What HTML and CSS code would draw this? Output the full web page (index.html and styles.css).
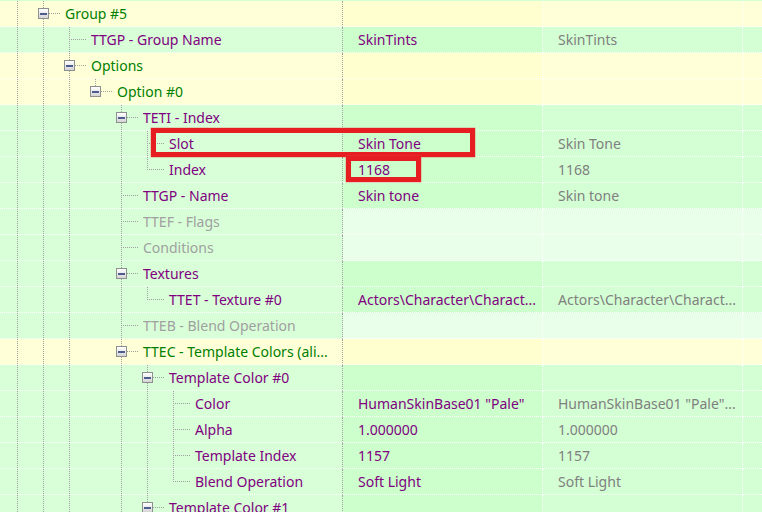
FILE: index.html
```html
<!DOCTYPE html>
<html>
<head>
<meta charset="utf-8">
<link rel="stylesheet" href="styles.css">
</head>
<body>
<div class="tree">
  <div class="row yel">
    <div class="c1"><span class="g v"></span><span class="g k tee"><span class="btn"><span class="minus"></span></span></span><span class="t grn">Group #5</span></div>
    <div class="c2"></div><div class="c3"></div><div class="c4"></div>
  </div>
  <div class="row grnrow">
    <div class="c1"><span class="g v"></span><span class="g v"></span><span class="g k tee"></span><span class="t pur">TTGP - Group Name</span></div>
    <div class="c2">SkinTints</div><div class="c3">SkinTints</div><div class="c4"></div>
  </div>
  <div class="row yel">
    <div class="c1"><span class="g v"></span><span class="g v"></span><span class="g k tee"><span class="btn"><span class="minus"></span></span></span><span class="t grn">Options</span></div>
    <div class="c2"></div><div class="c3"></div><div class="c4"></div>
  </div>
  <div class="row yel">
    <div class="c1"><span class="g v"></span><span class="g v"></span><span class="g v"></span><span class="g k last"><span class="btn"><span class="minus"></span></span></span><span class="t grn">Option #0</span></div>
    <div class="c2"></div><div class="c3"></div><div class="c4"></div>
  </div>
  <div class="row grnrow">
    <div class="c1"><span class="g v"></span><span class="g v"></span><span class="g v"></span><span class="g"></span><span class="g k tee"><span class="btn"><span class="minus"></span></span></span><span class="t pur">TETI - Index</span></div>
    <div class="c2"></div><div class="c3"></div><div class="c4"></div>
  </div>
  <div class="row grnrow">
    <div class="c1"><span class="g v"></span><span class="g v"></span><span class="g v"></span><span class="g"></span><span class="g v"></span><span class="g k tee"></span><span class="t pur">Slot</span></div>
    <div class="c2">Skin Tone</div><div class="c3">Skin Tone</div><div class="c4"></div>
  </div>
  <div class="row grnrow">
    <div class="c1"><span class="g v"></span><span class="g v"></span><span class="g v"></span><span class="g"></span><span class="g v"></span><span class="g k last"></span><span class="t pur">Index</span></div>
    <div class="c2">1168</div><div class="c3">1168</div><div class="c4"></div>
  </div>
  <div class="row grnrow">
    <div class="c1"><span class="g v"></span><span class="g v"></span><span class="g v"></span><span class="g"></span><span class="g k tee"></span><span class="t pur">TTGP - Name</span></div>
    <div class="c2">Skin tone</div><div class="c3">Skin tone</div><div class="c4"></div>
  </div>
  <div class="row lite">
    <div class="c1"><span class="g v"></span><span class="g v"></span><span class="g v"></span><span class="g"></span><span class="g k tee"></span><span class="t gry">TTEF - Flags</span></div>
    <div class="c2"></div><div class="c3"></div><div class="c4"></div>
  </div>
  <div class="row lite">
    <div class="c1"><span class="g v"></span><span class="g v"></span><span class="g v"></span><span class="g"></span><span class="g k tee"></span><span class="t gry">Conditions</span></div>
    <div class="c2"></div><div class="c3"></div><div class="c4"></div>
  </div>
  <div class="row grnrow">
    <div class="c1"><span class="g v"></span><span class="g v"></span><span class="g v"></span><span class="g"></span><span class="g k tee"><span class="btn"><span class="minus"></span></span></span><span class="t pur">Textures</span></div>
    <div class="c2"></div><div class="c3"></div><div class="c4"></div>
  </div>
  <div class="row grnrow">
    <div class="c1"><span class="g v"></span><span class="g v"></span><span class="g v"></span><span class="g"></span><span class="g v"></span><span class="g k last"></span><span class="t pur">TTET - Texture #0</span></div>
    <div class="c2">Actors\Character\Charact...</div><div class="c3">Actors\Character\Charact...</div><div class="c4"></div>
  </div>
  <div class="row lite">
    <div class="c1"><span class="g v"></span><span class="g v"></span><span class="g v"></span><span class="g"></span><span class="g k tee"></span><span class="t gry">TTEB - Blend Operation</span></div>
    <div class="c2"></div><div class="c3"></div><div class="c4"></div>
  </div>
  <div class="row yel">
    <div class="c1"><span class="g v"></span><span class="g v"></span><span class="g v"></span><span class="g"></span><span class="g k tee"><span class="btn"><span class="minus"></span></span></span><span class="t grn">TTEC - Template Colors (ali...</span></div>
    <div class="c2"></div><div class="c3"></div><div class="c4"></div>
  </div>
  <div class="row grnrow">
    <div class="c1"><span class="g v"></span><span class="g v"></span><span class="g v"></span><span class="g"></span><span class="g v"></span><span class="g k tee"><span class="btn"><span class="minus"></span></span></span><span class="t pur">Template Color #0</span></div>
    <div class="c2"></div><div class="c3"></div><div class="c4"></div>
  </div>
  <div class="row grnrow">
    <div class="c1"><span class="g v"></span><span class="g v"></span><span class="g v"></span><span class="g"></span><span class="g v"></span><span class="g v"></span><span class="g k tee"></span><span class="t pur">Color</span></div>
    <div class="c2">HumanSkinBase01 "Pale"</div><div class="c3">HumanSkinBase01 "Pale"...</div><div class="c4"></div>
  </div>
  <div class="row grnrow">
    <div class="c1"><span class="g v"></span><span class="g v"></span><span class="g v"></span><span class="g"></span><span class="g v"></span><span class="g v"></span><span class="g k tee"></span><span class="t pur">Alpha</span></div>
    <div class="c2">1.000000</div><div class="c3">1.000000</div><div class="c4"></div>
  </div>
  <div class="row grnrow">
    <div class="c1"><span class="g v"></span><span class="g v"></span><span class="g v"></span><span class="g"></span><span class="g v"></span><span class="g v"></span><span class="g k tee"></span><span class="t pur">Template Index</span></div>
    <div class="c2">1157</div><div class="c3">1157</div><div class="c4"></div>
  </div>
  <div class="row grnrow">
    <div class="c1"><span class="g v"></span><span class="g v"></span><span class="g v"></span><span class="g"></span><span class="g v"></span><span class="g v"></span><span class="g k last"></span><span class="t pur">Blend Operation</span></div>
    <div class="c2">Soft Light</div><div class="c3">Soft Light</div><div class="c4"></div>
  </div>
  <div class="row grnrow">
    <div class="c1"><span class="g v"></span><span class="g v"></span><span class="g v"></span><span class="g"></span><span class="g v"></span><span class="g k tee"><span class="btn"><span class="minus"></span></span></span><span class="t pur">Template Color #1</span></div>
    <div class="c2"></div><div class="c3"></div><div class="c4"></div>
  </div>

  <div class="mark mark-slot"></div>
  <div class="mark mark-index"></div>
</div>
</body>
</html>
```

FILE: styles.css
```css
html, body {
  margin: 0;
  padding: 0;
  overflow: hidden;
}
body {
  font-family: "Noto Sans", "Open Sans", sans-serif;
  font-size: 14px;
  background: #d4ffd4;
  width: 762px;
  height: 512px;
}
.tree {
  position: relative;
  padding-top: 1px;
}
.row {
  display: grid;
  grid-template-columns: 343px 200px 200px 1fr;
  height: 26px;
}
.row > div {
  box-sizing: border-box;
  height: 26px;
  border-bottom: 1px dotted #ffffff;
  white-space: nowrap;
  overflow: hidden;
}
.c1 {
  display: flex;
  align-items: stretch;
  padding-left: 4px;
  border-right: 1px dotted #a0a0a0;
}
.c2, .c3 {
  padding-left: 15px;
  line-height: 25px;
  border-right: 1px dotted #ffffff;
}
.c2 { color: #800080; }
.c3 { color: #808080; }

/* row colours */
.yel .c1, .yel .c3, .yel .c4 { background: #ffffd8; }
.yel .c2 { background: #ffffd0; }
.grnrow .c1 { background: #d8ffd8; }
.grnrow .c2 { background: #ccffcc; }
.grnrow .c3, .grnrow .c4 { background: #d4ffd4; }
.lite .c1 { background: #d8ffd8; }
.lite .c2, .lite .c3, .lite .c4 { background: #eaffea; }

/* tree guides */
.g {
  flex: none;
  width: 26px;
  height: 25px;
  box-sizing: border-box;
}
.g.k {
  width: 31px;
  padding: 7px 0 0 8px;
}
.g.v {
  background: repeating-linear-gradient(to bottom, #a0a0a0 0 1px, transparent 1px 2px) 13px 0 / 1px 100% no-repeat;
}
.g.tee {
  background:
    repeating-linear-gradient(to bottom, #a0a0a0 0 1px, transparent 1px 2px) 13px 0 / 1px 100% no-repeat,
    repeating-linear-gradient(to right, #a0a0a0 0 1px, transparent 1px 2px) 13px 12px / 18px 1px no-repeat;
}
.g.last {
  background:
    repeating-linear-gradient(to bottom, #a0a0a0 0 1px, transparent 1px 2px) 13px 0 / 1px 13px no-repeat,
    repeating-linear-gradient(to right, #a0a0a0 0 1px, transparent 1px 2px) 13px 12px / 18px 1px no-repeat;
}
.btn {
  display: flex;
  align-items: center;
  justify-content: center;
  width: 11px;
  height: 11px;
  box-sizing: border-box;
  border: 1px solid #8e8f8f;
  background: linear-gradient(#ffffff, #e6e6e6 60%, #d4d4d4);
}
.minus {
  display: block;
  width: 7px;
  height: 2px;
  background: #4d5c8c;
}
.t {
  margin-left: 4px;
  line-height: 25px;
}
.grn { color: #008000; }
.pur { color: #800080; }
.gry { color: #a0a0a0; }

/* red highlight marks drawn over the grid */
.mark {
  position: absolute;
  box-sizing: border-box;
  border: 5px solid #e61e22;
  box-shadow: 0 0 0 0.5px rgba(230, 80, 80, 0.5);
}
.mark-slot {
  left: 151px;
  top: 128px;
  width: 324px;
  height: 29px;
}
.mark-index {
  left: 346px;
  top: 156px;
  width: 75px;
  height: 26px;
}
```
